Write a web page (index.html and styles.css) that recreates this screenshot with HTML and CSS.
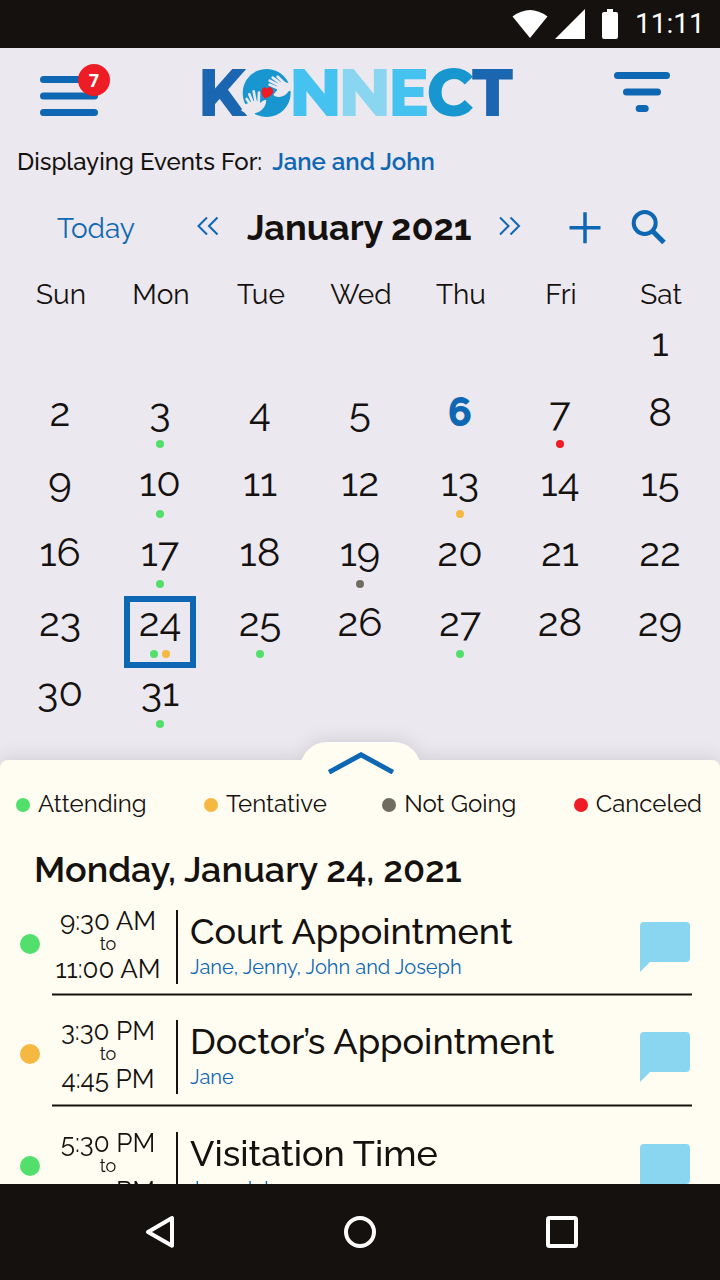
FILE: index.html
```
<!DOCTYPE html>
<html lang="en">
<head>
<meta charset="utf-8">
<title>Konnect</title>
<link rel="stylesheet" href="styles.css">
</head>
<body>
<div class="phone">
  <div class="status">
    <svg width="110" height="48" viewBox="510 0 110 48" fill="#fff">
      <path d="M512.5 16.5Q530 3.500 547.500 16.500L530 38Z"/>
      <path d="M585 9V39H555Z"/>
      <path d="M607 9h6v3h3a2 2 0 0 1 2 2v23a2 2 0 0 1-2 2h-12a2 2 0 0 1-2-2V14a2 2 0 0 1 2-2h3z"/>
    </svg>
    <span class="clock">11:11</span>
  </div>

  <header class="header">
    <div class="menu">
      <svg width="58" height="40" fill="#0e67b2">
        <rect y="0" width="58" height="7" rx="3.500"/><rect y="16.500" width="58" height="7" rx="3.500"/><rect y="33" width="58" height="7" rx="3.500"/>
      </svg>
      <span class="badge">7</span>
    </div>
    <svg class="logo" width="320" height="58" viewBox="198 64 320 58">
      <g class="logo-text">
        <text x="198" y="116" fill="#1b66b0" textLength="48" lengthAdjust="spacingAndGlyphs">K</text>
        <text x="289" y="116" fill="#45c2f0" textLength="53" lengthAdjust="spacingAndGlyphs">N</text>
        <text x="338.300" y="116" fill="#8ad6f1" textLength="53" lengthAdjust="spacingAndGlyphs">N</text>
        <text x="388.300" y="116" fill="#45c2f0" textLength="41" lengthAdjust="spacingAndGlyphs">E</text>
        <text x="426.500" y="116" fill="#1896cf" textLength="47" lengthAdjust="spacingAndGlyphs">C</text>
        <text x="472" y="116" fill="#1b66b0" textLength="41" lengthAdjust="spacingAndGlyphs">T</text>
      </g>
      <g transform="translate(238 64) scale(.3333)">
        <circle cx="86" cy="87" r="72" fill="#1896cf"/>
        <g fill="#ebe8ef" stroke="#ebe8ef" stroke-linecap="round" stroke-linejoin="round">
          <path stroke="none" d="M14 124L30 118Q50 103 68 116Q76 106 84 108Q86 118 79 128Q69 144 52 147L44 160L10 140Z"/>
          <path fill="none" stroke-width="8" d="M38 122L26 105M45 118L34 91M53 114L47 82M62 116L63 86"/>
          <path stroke="none" d="M166 54L151 58Q138 50 126 56Q112 68 118 78Q110 86 106 93Q114 101 128 98Q143 96 152 82L166 78Z"/>
          <path fill="none" stroke-width="8" d="M124 74L95 62M126 66L95 50M130 60L104 41M138 56L119 38"/>
        </g>
        <path fill="#ee1c25" d="M72 76Q77 65 87 74Q95 65 102 73Q111 83 100 93Q92 101 80 104Q67 90 72 76Z"/>
      </g>
    </svg>
    <svg class="filter" width="56" height="40" fill="#0e67b2">
      <rect width="56" height="7" rx="3.500"/><rect x="9" y="16.500" width="38" height="7" rx="3.500"/><rect x="21.700" y="33" width="13" height="7" rx="3.500"/>
    </svg>
  </header>

  <div class="showing">Displaying Events For: <b>Jane and John</b></div>

  <div class="toolbar">
    <span class="today">Today</span>
    <svg class="prev" width="22" height="20" viewBox="0 0 22 20"><path d="M10 1.500L1.500 10L10 18.500M20.500 1.500L12 10L20.500 18.500"/></svg>
    <h1 class="month">January 2021</h1>
    <svg class="next" width="22" height="20" viewBox="0.500 0 22 20"><path d="M1.500 1.500L10 10L1.500 18.500M12 1.500L20.500 10L12 18.500"/></svg>
    <svg class="add" width="32" height="32" viewBox="569 212 32 32"><path d="M569.500 227.700H600.500M585 212.200V243.200"/></svg>
    <svg class="search" width="36" height="36" viewBox="630 207.500 36 36"><circle cx="644.700" cy="222.500" r="11"/><path d="M652.500 230.500L664 242"/></svg>
  </div>

  <div class="calendar">
    <div class="weekdays"><span>Sun</span><span>Mon</span><span>Tue</span><span>Wed</span><span>Thu</span><span>Fri</span><span>Sat</span></div>
    <div class="days">
      <div class="day first">1</div>
      <div class="day">2</div>
      <div class="day">3<span class="dots"><i class="green"></i></span></div>
      <div class="day">4</div>
      <div class="day">5</div>
      <div class="day now">6</div>
      <div class="day">7<span class="dots"><i class="red"></i></span></div>
      <div class="day">8</div>
      <div class="day">9</div>
      <div class="day">10<span class="dots"><i class="green"></i></span></div>
      <div class="day">11</div>
      <div class="day">12</div>
      <div class="day">13<span class="dots"><i class="orange"></i></span></div>
      <div class="day">14</div>
      <div class="day">15</div>
      <div class="day">16</div>
      <div class="day">17<span class="dots"><i class="green"></i></span></div>
      <div class="day">18</div>
      <div class="day">19<span class="dots"><i class="gray"></i></span></div>
      <div class="day">20</div>
      <div class="day">21</div>
      <div class="day">22</div>
      <div class="day">23</div>
      <div class="day selected">24<span class="dots"><i class="green"></i><i class="orange"></i></span></div>
      <div class="day">25<span class="dots"><i class="green"></i></span></div>
      <div class="day">26</div>
      <div class="day">27<span class="dots"><i class="green"></i></span></div>
      <div class="day">28</div>
      <div class="day">29</div>
      <div class="day">30</div>
      <div class="day">31<span class="dots"><i class="green"></i></span></div>
    </div>
  </div>

  <section class="sheet">
    <div class="tab"><svg width="66" height="22" viewBox="328 752 66 22"><path d="M329 772.200L361 754.800L393 772.200"/></svg></div>
    <div class="legend">
      <span><i class="green"></i>Attending</span>
      <span><i class="orange"></i>Tentative</span>
      <span><i class="gray"></i>Not Going</span>
      <span><i class="red"></i>Canceled</span>
    </div>
    <h2 class="date">Monday, January 24, 2021</h2>
    <article class="event">
      <i class="mark green"></i>
      <div class="body">
        <div class="times"><span>9:30 AM</span><small>to</small><span class="end">11:00 AM</span></div>
        <div class="info"><h3>Court Appointment</h3><p>Jane, Jenny, John and Joseph</p></div>
        <svg class="bubble" width="50" height="50"><path d="M4 0H46a4 4 0 0 1 4 4V36a4 4 0 0 1-4 4H10L0 50V4a4 4 0 0 1 4-4z"/></svg>
      </div>
    </article>
    <article class="event second">
      <i class="mark orange"></i>
      <div class="body">
        <div class="times"><span>3:30 PM</span><small>to</small><span class="end">4:45 PM</span></div>
        <div class="info"><h3>Doctor’s Appointment</h3><p>Jane</p></div>
        <svg class="bubble" width="50" height="50"><path d="M4 0H46a4 4 0 0 1 4 4V36a4 4 0 0 1-4 4H10L0 50V4a4 4 0 0 1 4-4z"/></svg>
      </div>
    </article>
    <article class="event">
      <i class="mark green"></i>
      <div class="body">
        <div class="times"><span>5:30 PM</span><small>to</small><span class="end">7:30 PM</span></div>
        <div class="info"><h3>Visitation Time</h3><p>Jane, John</p></div>
        <svg class="bubble" width="50" height="50"><path d="M4 0H46a4 4 0 0 1 4 4V36a4 4 0 0 1-4 4H10L0 50V4a4 4 0 0 1 4-4z"/></svg>
      </div>
    </article>
  </section>

  <nav class="nav">
    <svg width="32" height="36" viewBox="144 1213 32 36"><path d="M172 1217V1244.800L148 1231Z"/></svg>
    <svg class="home" width="32" height="32"><circle cx="16" cy="16" r="14"/></svg>
    <svg width="32" height="32"><rect x="2" y="2" width="28" height="28" rx="1.500"/></svg>
  </nav>
</div>
</body>
</html>
```
FILE: styles.css
```
* { box-sizing: border-box; }
body { margin: 0; }
h1, h2, h3, p { margin: 0; font-weight: inherit; }
svg { display: block; flex: none; }
i { display: block; border-radius: 50%; flex: none; }

.phone {
  width: 720px; height: 1280px; overflow: hidden;
  display: flex; flex-direction: column;
  background: #ebe8ef; color: #15110f;
  font-family: Raleway, "Liberation Sans", sans-serif;
}
.green { background: #53df6c; }
.orange { background: #f5b942; }
.gray { background: #706d60; }
.red { background: #ee1c25; }

.status {
  height: 48px; flex: none; background: #15110f; color: #fff;
  display: flex; align-items: center; justify-content: flex-end; padding-right: 16px;
}
.clock { font: 28px/48px Roboto, sans-serif; width: 69px; margin-left: 15px; text-align: right; white-space: nowrap; }

.header { display: flex; height: 96px; flex: none; padding: 0 50px 0 40px; justify-content: space-between; }
.menu { position: relative; width: 58px; padding-top: 28px; }
.badge {
  position: absolute; left: 38px; top: 16px; width: 32px; height: 32px; border-radius: 50%;
  background: #ee1c25; color: #fff; text-align: center;
  font: 700 18px/32px "Open Sans", sans-serif;
}
.logo { margin: 16px -4px 0 0; overflow: visible; }
.logo-text { font: 800 67px Montserrat, Raleway, sans-serif; }
.filter { margin-top: 24px; }

.showing { height: 36px; line-height: 36px; flex: none; padding-left: 17px; font-size: 24px; font-weight: 500; white-space: nowrap; }
.showing b { font-weight: 600; color: #0e67b2; margin-left: 4px; }

.toolbar { height: 96px; flex: none; display: flex; align-items: center; padding-left: 57px; color: #0e67b2; }
.toolbar svg { fill: none; stroke: #0e67b2; stroke-width: 2; }
.today { font-size: 28px; width: 140px; }
.month { font-size: 36px; font-weight: 700; color: #15110f; width: 252px; padding: 0 0 2px 28px; white-space: nowrap; }
.toolbar .prev, .toolbar .next { margin-top: -4px; }
.toolbar .next { margin-left: 28px; }
.toolbar .add { margin-left: 48px; stroke-width: 3.500; }
.toolbar .search { margin: -4px 0 0 29px; stroke-width: 4; }
.toolbar .search path { stroke-width: 5; }

.calendar { height: 484px; flex: none; padding: 0 10px; }
.weekdays { display: grid; grid-template-columns: repeat(7, 100px); text-align: center; font-size: 28px; line-height: 38px; height: 46px; padding-left: 1px; }
.days { display: grid; grid-template-columns: repeat(7, 100px); grid-auto-rows: 70px; justify-items: center; font-size: 40px; line-height: 40px; }
.day { width: 60px; height: 60px; text-align: center; }
.first { grid-column: 7; }
.now { color: #0e67b2; font-weight: 800; }
.selected { outline: 6px solid #0e67b2; }
.dots { display: flex; justify-content: center; gap: 4px; margin-top: 8px; }
.dots i { width: 8px; height: 8px; }

.sheet {
  position: relative; flex: none; height: 424px; background: #fffdf1;
  border-radius: 8px 8px 0 0; filter: drop-shadow(0 -3px 8px rgba(20, 17, 15, .11));
  clip-path: inset(-60px 0 0 0);
}
.tab { position: absolute; left: 299.500px; top: -18px; width: 121.500px; height: 40px; border-radius: 27px 27px 0 0; background: #fffdf1; padding: 10px 0 0 28.500px; }
.tab path { fill: none; stroke: #0e67b2; stroke-width: 5; }
.legend { height: 87px; padding: 0 18px 0 16px; display: flex; align-items: center; justify-content: space-between; font-size: 24px; }
.legend span { display: flex; align-items: center; gap: 8px; white-space: nowrap; }
.legend span:nth-child(2) { margin-right: -2px; }
.legend i { width: 14px; height: 14px; margin-top: 2px; }
.date { height: 63px; line-height: 45px; padding-left: 34px; font-size: 36px; font-weight: 600; white-space: nowrap; }

.event { display: flex; height: 110px; padding: 0 28px 0 20px; }
.mark { width: 20px; height: 20px; margin: 24px 12px 0 0; }
.body { flex: 1; display: grid; grid-template-columns: 126px 1fr 52px; grid-template-rows: 74px 3px; row-gap: 9px; }
.body::after { content: ""; grid-column: 1 / -1; background: linear-gradient(#8a8880 0 1px, #15110f 1px 2px, #8a8880 2px); }
.second { height: 112px; }
.second .body { row-gap: 10px; }
.times { display: flex; flex-direction: column; padding-right: 12px; border-right: 2px solid #15110f; text-align: center; font-size: 26px; line-height: 22px; white-space: nowrap; }
.times small { font-size: 18px; line-height: 23px; }
.times .end { line-height: 29px; }
.info { padding-left: 12px; white-space: nowrap; }
.info h3 { font-size: 36px; line-height: 42px; font-weight: 500; }
.info p { font-size: 20px; line-height: 30px; color: #0e67b2; }
.bubble { margin-top: 12px; fill: #8ad6f1; }

.nav { height: 96px; flex: none; background: #15110f; display: flex; align-items: center; justify-content: space-between; padding: 0 142px 0 144px; }
.nav svg { fill: none; stroke: #fff; stroke-width: 4; stroke-linejoin: round; }
.nav .home { margin-right: 2px; }
```
